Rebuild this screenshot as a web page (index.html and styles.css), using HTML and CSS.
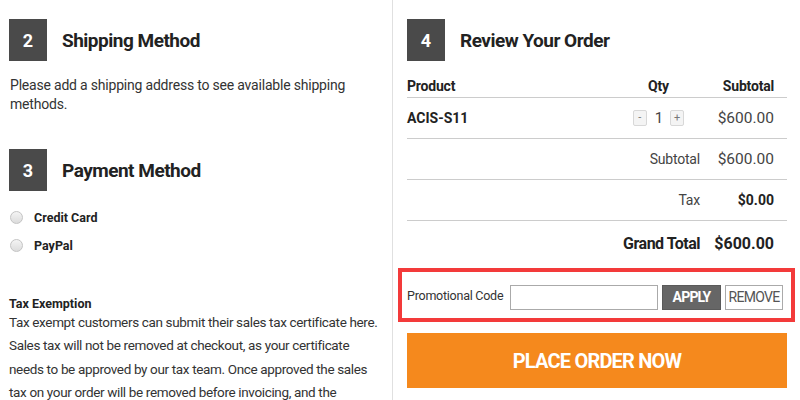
FILE: index.html
```html
<!DOCTYPE html>
<html>
<head>
<meta charset="utf-8">
<link rel="stylesheet" href="styles.css">
</head>
<body>
<div class="page">
  <div class="col left">
    <div class="step">
      <div class="num">2</div>
      <h2 class="title">Shipping Method</h2>
    </div>
    <p class="note">Please add a shipping address to see available shipping methods.</p>

    <div class="step step3">
      <div class="num">3</div>
      <h2 class="title">Payment Method</h2>
    </div>
    <div class="radios">
      <label class="radio"><span class="dot"></span>Credit Card</label>
      <label class="radio"><span class="dot"></span>PayPal</label>
    </div>

    <h3 class="subhead">Tax Exemption</h3>
    <p class="long">Tax exempt customers can submit their sales tax certificate here. Sales tax will not be removed at checkout, as your certificate needs to be approved by our tax team. Once approved the sales tax on your order will be removed before invoicing, and the</p>
  </div>

  <div class="col right">
    <div class="step">
      <div class="num">4</div>
      <h2 class="title">Review Your Order</h2>
    </div>
    <table class="order">
      <thead>
        <tr><th class="c-prod">Product</th><th class="c-qty">Qty</th><th class="c-sub">Subtotal</th></tr>
      </thead>
      <tbody>
        <tr class="item">
          <td class="c-prod prod">ACIS-S11</td>
          <td class="c-qty"><span class="qbtn">-</span><span class="qval">1</span><span class="qbtn">+</span></td>
          <td class="c-sub money">$600.00</td>
        </tr>
        <tr><td colspan="2" class="lbl">Subtotal</td><td class="c-sub money">$600.00</td></tr>
        <tr><td colspan="2" class="lbl">Tax</td><td class="c-sub strong">$0.00</td></tr>
        <tr class="grand"><td colspan="2" class="lbl">Grand Total</td><td class="c-sub">$600.00</td></tr>
      </tbody>
    </table>
    <div class="promo">
      <span class="promo-label">Promotional Code</span>
      <input class="promo-input" type="text">
      <button class="btn-apply">APPLY</button>
      <button class="btn-remove">REMOVE</button>
    </div>
    <button class="place">PLACE ORDER NOW</button>
  </div>
</div>
</body>
</html>
```

FILE: styles.css
```css
html, body {
  margin: 0;
  padding: 0;
  background: #fff;
  font-family: Roboto, "Liberation Sans", Arial, sans-serif;
  color: #333;
}
.page {
  display: flex;
  width: 800px;
  height: 400px;
  overflow: hidden;
}
.col.left {
  width: 383px;
  padding-left: 9px;
  border-right: 1px solid #e0e0e0;
}
.col.right {
  width: 380px;
  padding-left: 14px;
}
.step {
  display: flex;
  align-items: center;
  margin-top: 19px;
}
.num {
  width: 38px;
  height: 42px;
  background: #4a4a4a;
  color: #fff;
  font-weight: bold;
  font-size: 18px;
  display: flex;
  align-items: center;
  justify-content: center;
}
.title {
  margin: 0 0 0 15px;
  font-size: 19px;
  font-weight: bold;
  color: #222;
  letter-spacing: -0.5px;
}
.note {
  margin: 15px 0 0 1px;
  font-size: 14px;
  line-height: 19px;
  color: #333;
  width: 345px;
  letter-spacing: -0.2px;
}
.step3 {
  margin-top: 35px;
}
.radios {
  display: flex;
  flex-direction: column;
  gap: 8px;
  margin-top: 16px;
}
.radio {
  display: flex;
  align-items: center;
  height: 20px;
  font-size: 12.5px;
  font-weight: bold;
  color: #222;
}
.dot {
  width: 11px;
  height: 11px;
  border-radius: 50%;
  border: 1px solid #c4c4c4;
  background: linear-gradient(#f4f4f4, #dcdcdc);
  margin: 0 11px 0 1px;
}
.subhead {
  margin: 41px 0 0 0;
  font-size: 12.5px;
  font-weight: bold;
  color: #222;
}
.long {
  margin: 0;
  font-size: 13.5px;
  line-height: 23.3px;
  color: #333;
  width: 372px;
  letter-spacing: -0.35px;
}
.order {
  width: 380px;
  border-collapse: collapse;
  margin-top: 15px;
  font-size: 14px;
}
.order th {
  font-size: 14px;
  font-weight: bold;
  color: #222;
  height: 20px;
  padding: 0 0 1px 0;
  border-bottom: 1px solid #ccc;
  letter-spacing: -0.2px;
}
.order td {
  height: 40px;
  padding: 0;
  border-bottom: 1px solid #ccc;
  color: #444;
}
.order tr.grand td {
  height: 44px;
  border-bottom: none;
  font-weight: bold;
  font-size: 16px;
  color: #222;
}
.order tr.grand td.lbl { letter-spacing: -0.5px; }
.c-prod { width: 210px; text-align: left; }
.c-qty { width: 83px; text-align: center; }
.c-sub { width: 74px; text-align: right; padding-right: 13px !important; }
.prod { font-weight: bold; color: #222 !important; }
.lbl { text-align: right; padding-right: 0; letter-spacing: -0.2px; }
.money { font-size: 15.5px; }
.strong { font-weight: bold; color: #222 !important; }
.qbtn {
  display: inline-block;
  width: 12px;
  height: 14px;
  line-height: 13px;
  border: 1px solid #d8d8d8;
  border-radius: 2px;
  background: #f4f4f4;
  font-size: 11px;
  color: #777;
  vertical-align: middle;
}
.qval {
  display: inline-block;
  margin: 0 7px 0 8px;
  vertical-align: middle;
  font-size: 15px;
}
.promo {
  display: flex;
  align-items: center;
  margin: 3px -8px 0 -9px;
  height: 46px;
  border: 4px solid #f33a3a;
  padding-left: 5px;
}
.promo-label {
  font-size: 12.5px;
  color: #333;
  width: 103px;
  white-space: nowrap;
  letter-spacing: -0.25px;
  margin-top: 1px;
}
.promo-input {
  width: 144px;
  height: 21px;
  border: 1px solid #aaa;
  padding: 1px;
  margin: 0;
  margin-top: 4px;
}
.btn-apply {
  margin: 4px 0 0 4px;
  width: 59px;
  height: 25px;
  background: #666;
  color: #fff;
  border: 1px solid #5a5a5a;
  font-family: inherit;
  font-weight: bold;
  font-size: 14px;
  padding: 0;
  letter-spacing: -0.8px;
}
.btn-remove {
  margin: 4px 0 0 4px;
  width: 58px;
  height: 25px;
  background: #fff;
  color: #555;
  border: 1px solid #aaa;
  font-family: inherit;
  font-size: 14px;
  padding: 0;
  letter-spacing: -0.7px;
}
.place {
  display: block;
  width: 380px;
  height: 55px;
  margin-top: 11px;
  background: #f5891d;
  color: #fff;
  border: none;
  font-family: inherit;
  font-weight: bold;
  font-size: 20px;
  padding: 0;
  letter-spacing: -0.8px;
}
```
